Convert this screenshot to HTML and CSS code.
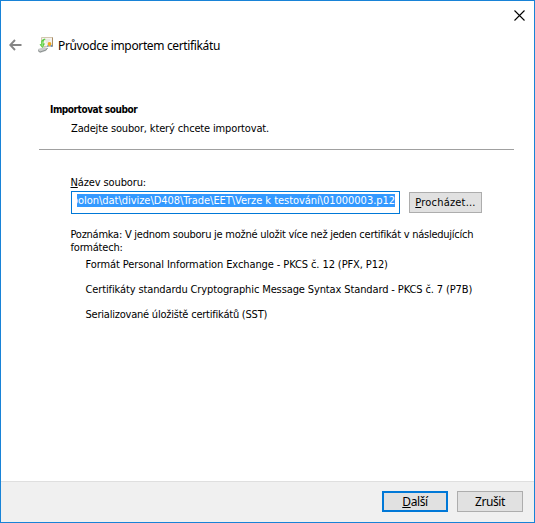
FILE: index.html
```
<!DOCTYPE html>
<html lang="cs">
<head>
<meta charset="utf-8">
<title>Průvodce importem certifikátu</title>
<link rel="stylesheet" href="styles.css">
</head>
<body>
<div class="window">
  <div class="titlebar">
    <button class="close" aria-label="Zavřít">
      <svg width="11" height="11" viewBox="0 0 11 11"><path d="M.5.5l10 10M10.5.5l-10 10" stroke="#000" stroke-width="1.1" fill="none"/></svg>
    </button>
  </div>
  <header class="header">
    <svg class="back" width="13" height="12" viewBox="0 0 13 12"><path d="M12.5 6H1.5M6 1L1.2 6 6 11" stroke="#858585" stroke-width="1.9" fill="none"/></svg>
    <svg class="cert" width="17" height="16" viewBox="0 0 17 16">
      <path d="M4.500.5h11v9h-11z" fill="#f6f3ed" stroke="#d3c6b0"/>
      <path d="M15.500.5v9" stroke="#a98c64"/>
      <path d="M8 3h5M9 5h3" stroke="#dedbd6"/>
      <path d="M1 12l6-2 4 1-2 3-6 2-2-2z" fill="#c9cccb"/>
      <path d="M1 13.500l2 1.500 6-2 1.500-2" stroke="#8d9292" fill="none"/>
      <path d="M8 1.500C5 2 3.500 4 4 7L2.500 7.500 5.500 11l2.500-4.500H6.500C6.300 4.500 7 3 8.500 2.500z" fill="#58cb41"/>
      <path d="M5.200 4.500v5" stroke="#a8ec90"/>
      <path d="M11.500 8l-1 1.500M13.500 8l1.500 1.500" stroke="#4a84cb" stroke-width="1.300"/>
      <circle cx="12.500" cy="7" r="1.900" fill="#f0a91d"/>
    </svg>
    <h1 class="title">Průvodce importem certifikátu</h1>
  </header>
  <main class="page">
    <h2 class="heading">Importovat soubor</h2>
    <p class="subheading">Zadejte soubor, který chcete importovat.</p>
    <hr class="rule">
    <div class="content">
      <label class="label"><u>N</u>ázev souboru:</label>
      <div class="row">
        <div class="field"><div class="clip"><span class="selected">polon\dat\divize\D408\Trade\EET\Verze k testování\01000003.p12</span></div></div>
        <button class="btn browse"><span><u>P</u>rocházet...</span></button>
      </div>
      <p class="note"><span class="n1">Poznámka: V jednom souboru je možné uložit více než jeden certifikát v následujících</span><br><span class="n2">formátech:</span></p>
      <ul class="formats">
        <li class="f1">Formát Personal Information Exchange - PKCS č. 12 (PFX, P12)</li>
        <li class="f2">Certifikáty standardu Cryptographic Message Syntax Standard - PKCS č. 7 (P7B)</li>
        <li class="f3">Serializované úložiště certifikátů (SST)</li>
      </ul>
    </div>
  </main>
  <footer class="footer">
    <button class="btn next"><span><u>D</u>alší</span></button>
    <button class="btn cancel"><span>Zrušit</span></button>
  </footer>
</div>
</body>
</html>
```
FILE: styles.css
```
* { box-sizing: border-box; }
body { margin: 0; font: 11px/13px "DejaVu Sans Condensed", "DejaVu Sans", sans-serif; font-stretch: condensed; color: #000; }
h1, h2, p, ul { margin: 0; padding: 0; }
.window { width: 535px; height: 523px; display: flex; flex-direction: column; background: #fff; border: 1px solid #1883d7; overflow: hidden; }
.titlebar { height: 30px; display: flex; justify-content: flex-end; padding: 8px 9px 0 0; }
.close { width: 11px; height: 11px; margin-top: 1px; padding: 0; border: 0; background: none; display: flex; }
.header { height: 28px; display: flex; align-items: center; padding-left: 8px; white-space: nowrap; }
.cert { margin-left: 15px; }
.title { margin-left: 4px; font: 400 12px/20px "Noto Sans", sans-serif; letter-spacing: -.36px; padding-top: 1px; }
.page { flex: 1; padding-top: 44px; white-space: nowrap; }
.heading { margin-left: 49px; font: 700 10px/13px "DejaVu Sans Condensed", sans-serif; font-stretch: condensed; height: 13px; letter-spacing: -.44px; }
.subheading { margin: 6px 0 0 70px; letter-spacing: -.15px; }
.rule { margin: 14px 20px 0 38px; border: 0; height: 1px; background: #a0a0a0; }
.content { margin: 26px 0 0 70px; }
.label { display: block; margin-left: -.5px; letter-spacing: -.12px; }
u { text-decoration: underline; text-underline-offset: 1px; text-decoration-thickness: 1px; text-decoration-skip-ink: none; }
.row { display: flex; gap: 9px; margin-top: 2px; }
.field { width: 329px; height: 23px; border: 1px solid #0078d7; padding: 2px 4px 0 5px; }
.clip { height: 13px; display: flex; justify-content: flex-end; overflow: hidden; background: #3399ff; }
.selected { color: #fff; letter-spacing: -.04px; }
.btn { display: flex; align-items: center; justify-content: center; padding: 0; background: #e1e1e1; border: 1px solid #adadad; color: #000; font: inherit; }
.browse { width: 73px; height: 21px; margin-top: 1px; letter-spacing: .2px; }
.note { margin: 14px 0 0 -.5px; }
.n1 { letter-spacing: -.25px; }
.n2 { letter-spacing: -.2px; }
.formats { list-style: none; margin: 4px 0 0 14.5px; }
.formats li { height: 25px; }
.f1 { letter-spacing: -.1px; }
.f2 { letter-spacing: -.12px; }
.f3 { letter-spacing: -.22px; }
.footer { height: 41px; border-top: 1px solid #dfdfdf; background: #f0f0f0; display: flex; justify-content: flex-end; gap: 9px; padding: 9px 11px 0 0; }
.footer .btn { width: 66px; height: 21px; font: 12px/16px "Noto Sans", sans-serif; letter-spacing: -.4px; }
.footer .next { border: 2px solid #0078d7; }
```
